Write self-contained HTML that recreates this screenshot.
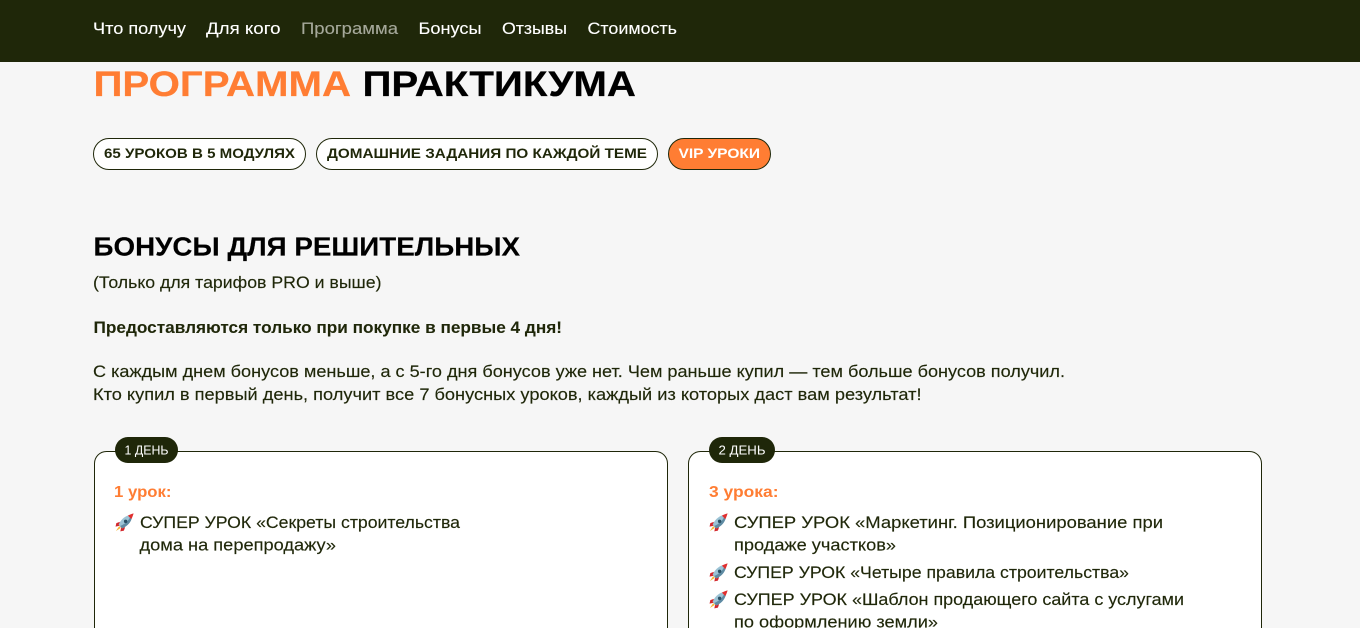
<!DOCTYPE html>
<html lang="ru">
<head>
<meta charset="utf-8">
<title>Программа практикума</title>
<style>
html,body{margin:0;padding:0;width:1360px;height:628px;overflow:hidden;background:#f6f6f6}
svg{display:block;position:absolute;left:0;top:0;overflow:hidden}
text{font-family:"Liberation Sans","DejaVu Sans",sans-serif;white-space:pre}
.nav{font-size:16.5px;fill:#fff;stroke:#fff;stroke-width:.12px}
.b{font-weight:700}
.t{font-size:16.3px;fill:#1f2709;stroke:#1f2709;stroke-width:.14px}
.t.b{stroke-width:.05px}
.pill{font-size:14px;font-weight:700;fill:#1f2709}
</style>
</head>
<body>
<svg width="1360" height="628" viewBox="0 0 1360 628" xmlns="http://www.w3.org/2000/svg">
<defs>
<symbol id="rocket" viewBox="0 0 20 20">
<path d="M5 9.400 1.400 10.600.6 14.400 5 13.400Z" fill="#d3272c"/>
<path d="M10.600 15 9.400 18.600 5.600 19.400 6.600 15Z" fill="#d3272c"/>
<path d="M4.400 13.800 1 19 6.200 15.600Z" fill="#f7b733"/>
<path d="M3.800 12.400C6 7.200 10 3.600 14.400 2.400L17.600 5.600C16.400 10 12.800 14 7.600 16.200Z" fill="#9cc3d5"/>
<path d="M3.800 12.400 7.600 16.200C12.800 14 16.400 10 17.600 5.600L16 4.200C14 8.600 10 11.800 5.200 13.800Z" fill="#5f8ba3"/>
<path d="M13.600 2.800C15.600 1.600 17.800 1 19.600.4 19 2.200 18.400 4.400 17.200 6.400Z" fill="#e02f2f"/>
<circle cx="11.200" cy="8.800" r="1.800" fill="#2a4f63"/>
</symbol>
</defs>

<rect width="1360" height="628" fill="#f6f6f6"/>
<rect width="1360" height="62" fill="#1f2709"/>

<text class="nav" x="93" y="34" textLength="93" lengthAdjust="spacingAndGlyphs">Что получу</text>
<text class="nav" x="206" y="34" textLength="74.500" lengthAdjust="spacingAndGlyphs">Для кого</text>
<text class="nav" x="301" y="34" textLength="97" lengthAdjust="spacingAndGlyphs" style="fill:#a5a89a;stroke:#a5a89a">Программа</text>
<text class="nav" x="418.500" y="34" textLength="63" lengthAdjust="spacingAndGlyphs">Бонусы</text>
<text class="nav" x="502" y="34" textLength="65" lengthAdjust="spacingAndGlyphs">Отзывы</text>
<text class="nav" x="587.500" y="34" textLength="89.500" lengthAdjust="spacingAndGlyphs">Стоимость</text>

<text class="b" x="93.500" y="96" font-size="35" fill="#ff7d33" stroke="#ff7d33" stroke-width=".25" textLength="257.500" lengthAdjust="spacingAndGlyphs">ПРОГРАММА</text>
<text class="b" x="362.500" y="96" font-size="35" fill="#000" stroke="#000" stroke-width=".25" textLength="273.500" lengthAdjust="spacingAndGlyphs">ПРАКТИКУМА</text>

<rect x="93.500" y="138.500" width="212" height="31" rx="15.500" fill="#fff" stroke="#1f2709"/>
<text class="pill" x="104" y="158" textLength="191" lengthAdjust="spacingAndGlyphs">65 УРОКОВ В 5 МОДУЛЯХ</text>
<rect x="316.500" y="138.500" width="341" height="31" rx="15.500" fill="#fff" stroke="#1f2709"/>
<text class="pill" x="327" y="158" textLength="320" lengthAdjust="spacingAndGlyphs">ДОМАШНИЕ ЗАДАНИЯ ПО КАЖДОЙ ТЕМЕ</text>
<rect x="668.500" y="138.500" width="102" height="31" rx="15.500" fill="#ff7d33" stroke="#1f2709"/>
<text class="pill" x="678.500" y="158" textLength="81.500" lengthAdjust="spacingAndGlyphs" style="fill:#fff">VIP УРОКИ</text>

<text class="b" x="93.500" y="255.500" font-size="26" fill="#000" stroke="#000" stroke-width=".15" textLength="426.500" lengthAdjust="spacingAndGlyphs">БОНУСЫ ДЛЯ РЕШИТЕЛЬНЫХ</text>
<text class="t" x="93" y="288" textLength="288.500" lengthAdjust="spacingAndGlyphs">(Только для тарифов PRO и выше)</text>
<text class="t b" x="93.500" y="333" textLength="468.500" lengthAdjust="spacingAndGlyphs">Предоставляются только при покупке в первые 4 дня!</text>
<text class="t" x="93" y="377" textLength="972" lengthAdjust="spacingAndGlyphs">С каждым днем бонусов меньше, а с 5-го дня бонусов уже нет. Чем раньше купил — тем больше бонусов получил.</text>
<text class="t" x="93" y="400" textLength="828.500" lengthAdjust="spacingAndGlyphs">Кто купил в первый день, получит все 7 бонусных уроков, каждый из которых даст вам результат!</text>

<path d="M94.500 629V463.500a12 12 0 0 1 12-12H655.500a12 12 0 0 1 12 12V629Z" fill="#fff" stroke="#1f2709"/>
<rect x="115" y="437" width="63" height="26" rx="13" fill="#1f2709"/>
<text x="124.500" y="454.500" font-size="12.500" fill="#fff" textLength="44" lengthAdjust="spacingAndGlyphs">1 ДЕНЬ</text>
<text class="b" x="114" y="497" font-size="16" fill="#ff7d33" textLength="57.500" lengthAdjust="spacingAndGlyphs">1 урок:</text>
<use href="#rocket" x="115" y="513" width="19" height="19"/>
<text class="t" x="140" y="528" textLength="320" lengthAdjust="spacingAndGlyphs">СУПЕР УРОК «Секреты строительства</text>
<text class="t" x="139.500" y="550.500" textLength="196.500" lengthAdjust="spacingAndGlyphs">дома на перепродажу»</text>

<path d="M688.500 629V463.500a12 12 0 0 1 12-12H1249.500a12 12 0 0 1 12 12V629Z" fill="#fff" stroke="#1f2709"/>
<rect x="709" y="437" width="66" height="26" rx="13" fill="#1f2709"/>
<text x="718.500" y="454.500" font-size="12.500" fill="#fff" textLength="47" lengthAdjust="spacingAndGlyphs">2 ДЕНЬ</text>
<text class="b" x="709" y="497" font-size="16" fill="#ff7d33" textLength="69.500" lengthAdjust="spacingAndGlyphs">3 урока:</text>
<use href="#rocket" x="709" y="513" width="19" height="19"/>
<text class="t" x="734" y="528" textLength="429" lengthAdjust="spacingAndGlyphs">СУПЕР УРОК «Маркетинг. Позиционирование при</text>
<text class="t" x="734" y="550.500" textLength="162" lengthAdjust="spacingAndGlyphs">продаже участков»</text>
<use href="#rocket" x="709" y="563" width="19" height="19"/>
<text class="t" x="734" y="578" textLength="395" lengthAdjust="spacingAndGlyphs">СУПЕР УРОК «Четыре правила строительства»</text>
<use href="#rocket" x="709" y="590" width="19" height="19"/>
<text class="t" x="734" y="605" textLength="450" lengthAdjust="spacingAndGlyphs">СУПЕР УРОК «Шаблон продающего сайта с услугами</text>
<text class="t" x="734" y="627.500" textLength="204" lengthAdjust="spacingAndGlyphs">по оформлению земли»</text>
</svg>
</body>
</html>
